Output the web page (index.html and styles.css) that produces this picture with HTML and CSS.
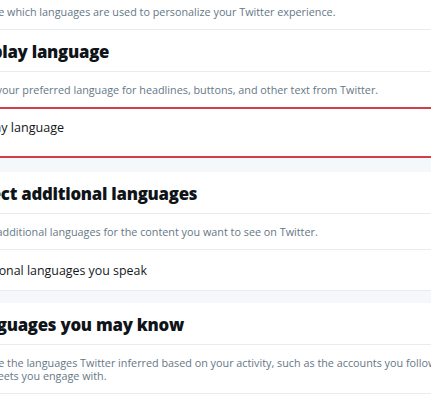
FILE: index.html
```html
<!DOCTYPE html>
<html lang="en">

<head>
    <meta charset="UTF-8">
    <meta name="viewport" content="width=device-width, initial-scale=1.0">
    <title>Languages</title>
    <link rel="stylesheet" href="styles.css">
</head>

<body>
    <main class="settings">
        <div class="settings__desc">Manage which languages are used to personalize your Twitter experience.</div>

        <div class="settings__title">
            <h2>Display language</h2>
        </div>
        <div class="settings__desc settings__desc--flush">Select your preferred language for headlines, buttons, and other text from Twitter.</div>
        <div class="select select--focus">
            <span class="select__value">Display language</span>
        </div>

        <div class="settings__gap"></div>

        <div class="settings__title">
            <h2>Select additional languages</h2>
        </div>
        <div class="settings__desc">Select additional languages for the content you want to see on Twitter.</div>
        <div class="settings__item">Additional languages you speak</div>

        <div class="settings__gap"></div>

        <div class="settings__title">
            <h2>Languages you may know</h2>
        </div>
        <div class="settings__desc">Manage the languages Twitter inferred based on your activity, such as the accounts you follow and the Tweets you engage with.</div>
    </main>
</body>

</html>
```

FILE: styles.css
```css
* {
    margin: 0;
    padding: 0;
    box-sizing: border-box;
}

body {
    background: #fff;
    overflow: hidden;
    font-family: 'Open Sans', 'Noto Sans', sans-serif;
    color: #14171a;
}

.settings {
    width: 530px;
    margin: -6px 0 0 -48px;
}

.settings__desc {
    padding: 11px 15px 11px 12px;
    font-size: 10.8px;
    line-height: 13px;
    color: #657786;
    border-bottom: 1px solid #e6ecf0;
}

.settings__desc--flush {
    border-bottom: 0;
}

.settings__title {
    padding: 10px 15px 8px 14px;
    border-bottom: 1px solid #e6ecf0;
}

.settings__title h2 {
    font-size: 16.8px;
    line-height: 23px;
    font-weight: 800;
    letter-spacing: -0.25px;
    color: #0f1419;
}

.settings__item {
    padding: 11px 15px 9px 13px;
    font-size: 12.4px;
    line-height: 20px;
    border-bottom: 1px solid #e6ecf0;
}

.select {
    height: 51px;
    padding: 9px 15px 0 13px;
    border-top: 2px solid #e6ecf0;
    border-bottom: 2px solid #e6ecf0;
}

.select--focus {
    border-color: #cf3f4a;
}

.select__value {
    display: block;
    font-size: 12.6px;
    line-height: 20px;
}

.settings__gap {
    height: 14px;
    background: #f5f8fa;
}

.settings__item + .settings__gap {
    height: 12px;
}
```
